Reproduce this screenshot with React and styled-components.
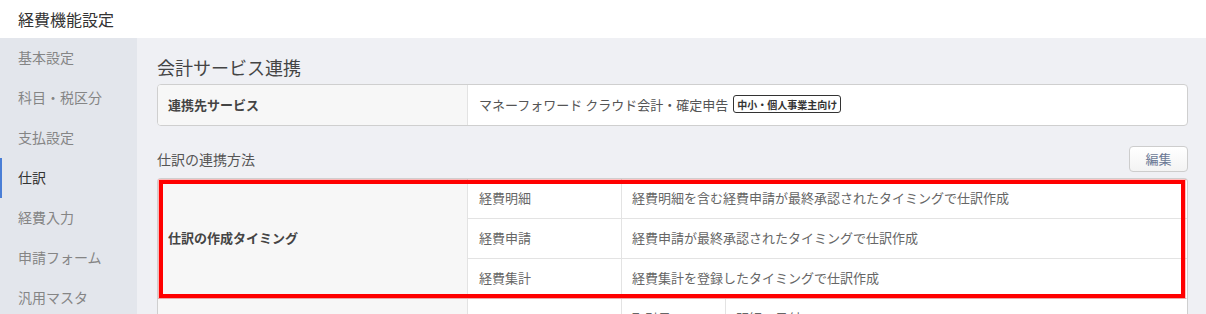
import React from "react";
import styled, { createGlobalStyle } from "styled-components";

const GlobalStyle = createGlobalStyle`
  html, body {
    margin: 0;
    padding: 0;
    background: #ffffff;
    font-family: "Noto Sans CJK JP", "Noto Sans", sans-serif;
    color: #555;
  }
  * { box-sizing: border-box; }
`;

const Page = styled.div`
  display: flex;
  flex-direction: column;
  width: 1206px;
  height: 314px;
  overflow: hidden;
`;

const Header = styled.header`
  height: 38px;
  flex: none;
  display: flex;
  align-items: center;
  padding: 0 18px;
  background: #fff;
  font-size: 16px;
  color: #333;
`;

const Body = styled.div`
  flex: 1;
  display: flex;
  min-height: 0;
`;

const Sidebar = styled.nav`
  width: 137px;
  flex: none;
  background: #e3e6ec;
  display: flex;
  flex-direction: column;
`;

const NavItem = styled.div`
  height: 40px;
  flex: none;
  display: flex;
  align-items: center;
  padding: 0 18px 2px 16px;
  font-size: 14px;
  color: ${(p) => (p.$active ? "#333" : "#858585")};
  border-left: 2px solid ${(p) => (p.$active ? "#4a7ed6" : "transparent")};
`;

const Main = styled.main`
  flex: 1;
  background: #eff0f4;
  padding: 16px 18px 0 20px;
  display: flex;
  flex-direction: column;
  min-height: 0;
  & > * { flex: none; }
`;

const Title = styled.h2`
  margin: 0;
  font-size: 18px;
  line-height: 26px;
  font-weight: 400;
  color: #444;
`;

const Card = styled.div`
  margin-top: 4px;
  height: 42px;
  display: grid;
  grid-template-columns: 310px 1fr;
  border: 1px solid #cfcfcf;
  border-radius: 4px;
  overflow: hidden;
  background: #fff;
`;

const KeyCell = styled.div`
  background: #f7f7f7;
  border-right: 1px solid #e3e3e3;
  display: flex;
  align-items: center;
  padding: 0 10px 2px;
  font-size: 13px;
  font-weight: 700;
  color: #444;
`;

const ValueCell = styled.div`
  display: flex;
  align-items: center;
  gap: 5px;
  padding: 0 11px 2px;
  font-size: 13px;
  color: #555;
`;

const Badge = styled.span`
  display: inline-flex;
  align-items: center;
  height: 18px;
  padding: 0 3px;
  border: 1px solid #333;
  border-radius: 3px;
  font-size: 10px;
  font-weight: 700;
  color: #333;
`;

const SectionHead = styled.div`
  margin-top: 20px;
  height: 26px;
  display: flex;
  align-items: center;
  justify-content: space-between;
`;

const SectionTitle = styled.h3`
  margin: 0;
  font-size: 14px;
  font-weight: 400;
  color: #555;
`;

const EditButton = styled.button`
  width: 59px;
  height: 26px;
  border: 1px solid #cdcdcd;
  border-radius: 4px;
  background: linear-gradient(#ffffff, #f3f3f3);
  font-family: inherit;
  font-size: 13px;
  color: #6a7894;
  padding: 0 0 1px;
`;

const Table = styled.div`
  margin-top: 6px;
  border: 1px solid #cfcfcf;
  border-bottom: none;
  border-radius: 4px 4px 0 0;
  background: #fff;
`;

const Group = styled.div`
  position: relative;
  display: grid;
  grid-template-columns: 310px 1fr;
  border-bottom: 1px solid #e3e3e3;
`;

const SubRows = styled.div`
  display: flex;
  flex-direction: column;
`;

const SubRow = styled.div`
  height: 40px;
  display: grid;
  grid-template-columns: 154px 1fr;
  border-bottom: 1px solid #e3e3e3;
  &:last-child { border-bottom: none; height: 39px; }
`;

const SubKey = styled.div`
  display: flex;
  align-items: center;
  padding: 0 11px 2px;
  border-right: 1px solid #e3e3e3;
  font-size: 13px;
  color: #666;
`;

const SubValue = styled.div`
  display: grid;
  grid-template-columns: ${(p) => (p.$split ? "103px 1fr" : "1fr")};
`;

const Text = styled.div`
  display: flex;
  align-items: center;
  padding: 0 10px 2px;
  font-size: 13px;
  color: #666;
  & + & { border-left: 1px solid #e3e3e3; }
`;

const Highlight = styled.div`
  position: absolute;
  top: 1px;
  left: 1px;
  right: 2px;
  bottom: 0;
  border: 4px solid #ff0000;
  box-shadow: 0 0 0 1px rgba(255, 0, 0, 0.25);
  pointer-events: none;
`;

const navItems = ["基本設定", "科目・税区分", "支払設定", "仕訳", "経費入力", "申請フォーム", "汎用マスタ"];

const timings = [
  ["経費明細", "経費明細を含む経費申請が最終承認されたタイミングで仕訳作成"],
  ["経費申請", "経費申請が最終承認されたタイミングで仕訳作成"],
  ["経費集計", "経費集計を登録したタイミングで仕訳作成"],
];

export default function App() {
  return (
    <Page>
      <GlobalStyle />
      <Header>経費機能設定</Header>
      <Body>
        <Sidebar>
          {navItems.map((n) => (
            <NavItem key={n} $active={n === "仕訳"}>{n}</NavItem>
          ))}
        </Sidebar>
        <Main>
          <Title>会計サービス連携</Title>
          <Card>
            <KeyCell>連携先サービス</KeyCell>
            <ValueCell>
              マネーフォワード クラウド会計・確定申告
              <Badge>中小・個人事業主向け</Badge>
            </ValueCell>
          </Card>

          <SectionHead>
            <SectionTitle>仕訳の連携方法</SectionTitle>
            <EditButton>編集</EditButton>
          </SectionHead>

          <Table>
            <Group>
              <KeyCell>仕訳の作成タイミング</KeyCell>
              <SubRows>
                {timings.map(([k, v]) => (
                  <SubRow key={k}>
                    <SubKey>{k}</SubKey>
                    <SubValue><Text>{v}</Text></SubValue>
                  </SubRow>
                ))}
              </SubRows>
              <Highlight />
            </Group>
            <Group>
              <KeyCell />
              <SubRows>
                <SubRow>
                  <SubKey />
                  <SubValue $split>
                    <Text>取引日</Text>
                    <Text>明細の日付</Text>
                  </SubValue>
                </SubRow>
              </SubRows>
            </Group>
          </Table>
        </Main>
      </Body>
    </Page>
  );
}
